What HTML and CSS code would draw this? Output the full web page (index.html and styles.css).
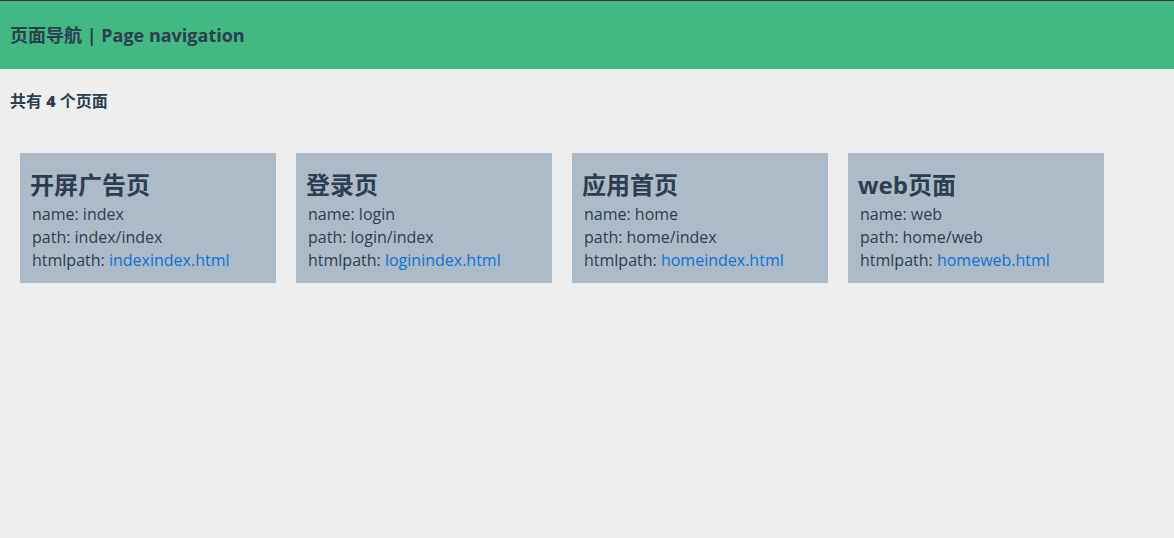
FILE: index.html
```html
<!DOCTYPE html>
<html lang="zh">
<head>
<meta charset="utf-8">
<link rel="stylesheet" href="styles.css">
</head>
<body>
<header class="topbar">页面导航 | Page navigation</header>
<p class="count">共有 <b>4</b> 个页面</p>
<div class="cards">
  <div class="card">
    <h3 class="title">开屏广告页</h3>
    <div class="line">name: index</div>
    <div class="line">path: index/index</div>
    <div class="line">htmlpath: <a href="#">indexindex.html</a></div>
  </div>
  <div class="card">
    <h3 class="title">登录页</h3>
    <div class="line">name: login</div>
    <div class="line">path: login/index</div>
    <div class="line">htmlpath: <a href="#">loginindex.html</a></div>
  </div>
  <div class="card">
    <h3 class="title">应用首页</h3>
    <div class="line">name: home</div>
    <div class="line">path: home/index</div>
    <div class="line">htmlpath: <a href="#">homeindex.html</a></div>
  </div>
  <div class="card">
    <h3 class="title">web页面</h3>
    <div class="line">name: web</div>
    <div class="line">path: home/web</div>
    <div class="line">htmlpath: <a href="#">homeweb.html</a></div>
  </div>
</div>
</body>
</html>
```
FILE: styles.css
```css
html, body {
  margin: 0;
  padding: 0;
  background: #eeeeee;
  font-family: "Open Sans", "Noto Sans CJK SC", sans-serif;
  color: #2c3e50;
}
.topbar {
  border-top: 1px solid #2f3b3f;
  background: #42b883;
  height: 68px;
  line-height: 68px;
  padding: 0 10px;
  font-size: 18px;
  font-weight: bold;
  color: #2c3e50;
}
.count {
  margin: 0;
  padding: 21px 10px 0;
  line-height: 22px;
  font-size: 16px;
  font-weight: bold;
}
.cards {
  display: flex;
  gap: 20px;
  padding: 41px 20px 0;
}
.card {
  width: 236px;
  background: #adbbc9;
  padding: 10px 10px 11px;
}
.title {
  margin: 7px 0 3px;
  font-size: 24px;
  line-height: 30px;
  font-weight: bold;
}
.line {
  padding-left: 2px;
  font-size: 16px;
  line-height: 23px;
  color: #2c3e50;
}
.line a {
  color: #0b74d6;
  text-decoration: none;
}
```
